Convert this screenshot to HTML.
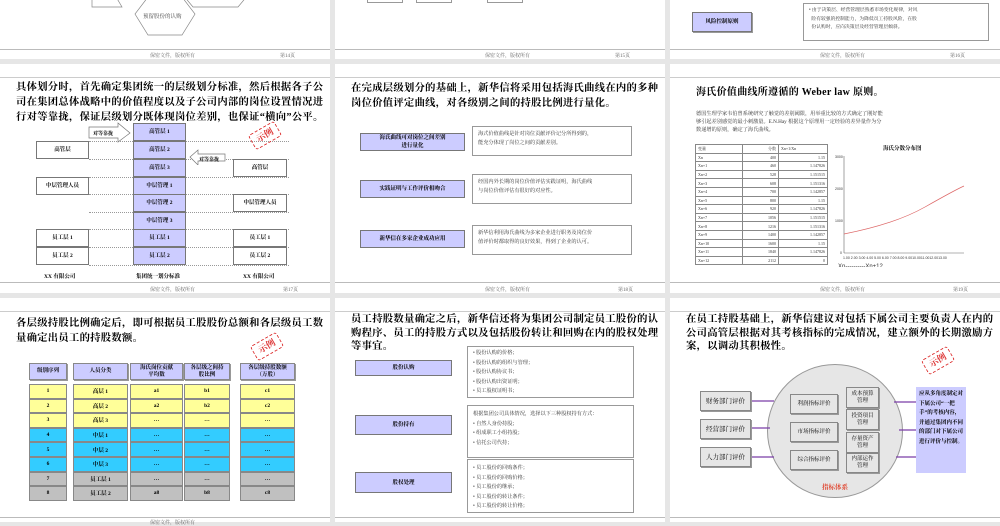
<!DOCTYPE html>
<html><head><meta charset="utf-8">
<style>
*{margin:0;padding:0;box-sizing:border-box}
body{width:1000px;height:522px;background:#e6e6e6;position:relative;overflow:hidden;font-family:"Liberation Serif","Noto Serif CJK SC",serif;color:#000}
.s{position:absolute;background:#fff;overflow:hidden}
.a{position:absolute}
.ft{position:absolute;font-size:5px;color:#666;white-space:nowrap}
.ln{position:absolute;left:0;right:0;height:1px;background:#bbb}
.t{position:absolute;font-weight:bold;font-size:10.3px;line-height:15px;letter-spacing:0.3px;white-space:nowrap}
.bx{position:absolute;border:1px solid #777;display:flex;align-items:center;justify-content:center;text-align:center;font-size:5.5px;line-height:8px;font-weight:bold}
.lav{background:#ccccff}
.wb{position:absolute;border:1px solid #999;background:#fff;font-size:5.2px;line-height:9px;color:#333;padding:3px 5px}
.dl{position:absolute;height:0;border-top:1px dotted #999}
.stamp{position:absolute;width:30px;height:17px;border:1px dashed #d33;color:#d33;font-size:9px;font-weight:bold;text-align:center;line-height:15px;transform:rotate(-30deg);border-radius:3px}
table{border-collapse:collapse}
.tb td{border:1px solid #888;font-size:4px;height:8.6px;padding:0 2px;color:#333}
.c{position:absolute;border:1px solid #888;display:flex;align-items:center;justify-content:center;font-size:5.5px;font-weight:bold;text-align:center;line-height:7px;box-shadow:1px 1px 0 #999}
</style></head><body>

<!-- Row 1 -->
<div class="s" style="left:0;top:0;width:330px;height:59px">
<svg class="a" style="left:0;top:0" width="330" height="48"><g fill="none" stroke="#888" stroke-width="0.7">
<polygon points="92,-10 112,-10 122,7 112,7 102,7 92,7"/>
<polygon points="183,-5 193,7 238,7 248,-5"/>
<polygon points="148,-3 182,-3 195,14 182,35 148,35 135,14"/>
</g></svg>
<div class="a" style="left:143px;top:12px;font-size:5.5px;color:#444">预留股份的认购</div>
<div class="ln" style="top:49px"></div>
<div class="ft" style="left:150px;top:52px">保密文件，版权所有</div>
<div class="ft" style="left:280px;top:52px">第14页</div>
</div>
<div class="s" style="left:335px;top:0;width:330px;height:59px">
<div class="a" style="left:32px;top:-5px;width:36px;height:8px;border:1px solid #999"></div>
<div class="a" style="left:81px;top:-5px;width:36px;height:8px;border:1px solid #999"></div>
<div class="a" style="left:152px;top:-5px;width:36px;height:8px;border:1px solid #999"></div>
<div class="a" style="left:208px;top:-5px;width:32px;height:5px;border:1px solid #bbb"></div>
<div class="a" style="left:240px;top:-5px;width:20px;height:5px;border:1px solid #bbb"></div>
<div class="ln" style="top:49px"></div>
<div class="ft" style="left:150px;top:52px">保密文件，版权所有</div>
<div class="ft" style="left:280px;top:52px">第15页</div>
</div>
<div class="s" style="left:670px;top:0;width:330px;height:59px">
<div class="bx lav" style="left:22px;top:12px;width:60px;height:20px;box-shadow:1px 1px 0 #999">风险控制原则</div>
<div class="wb" style="left:133px;top:3px;width:186px;height:38px;font-size:4.8px;line-height:8.5px">• 由于决策层、经营管理层熟悉市场变化规律，对风<br>&nbsp; 险有较强的控制能力，为降低员工持股风险，在股<br>&nbsp; 份认购时，应向决策层及经营管理层倾斜。</div>
<div class="ln" style="top:49px"></div>
<div class="ft" style="left:150px;top:52px">保密文件，版权所有</div>
<div class="ft" style="left:280px;top:52px">第16页</div>
</div>

<!-- Row 2 slide 17 -->
<div class="s" style="left:0;top:64px;width:330px;height:229px">
<div class="ln" style="top:13px;background:#ccc"></div>
<div class="t" style="left:16px;top:16px">具体划分时，首先确定集团统一的层级划分标准，然后根据各子公<br>司在集团总体战略中的价值程度以及子公司内部的岗位设置情况进<br>行对等靠拢，保证层级划分既体现岗位差别，也保证“横向”公平。</div>
</div>
<div class="a" style="left:0;top:0;width:330px;height:293px">
<div class="dl" style="left:89px;top:141px;width:200px"></div>
<div class="dl" style="left:89px;top:159px;width:200px"></div>
<div class="dl" style="left:89px;top:177px;width:200px"></div>
<div class="dl" style="left:89px;top:194px;width:200px"></div>
<div class="dl" style="left:89px;top:212px;width:200px"></div>
<div class="dl" style="left:89px;top:229px;width:200px"></div>
<div class="dl" style="left:89px;top:247px;width:200px"></div>
<div class="dl" style="left:89px;top:265px;width:200px"></div>
<div class="a" style="left:133px;top:123px;width:53px;height:142px;background:#ccccff;border:1px solid #888"></div>
<div class="bx lav" style="left:133px;top:123px;width:53px;height:18px">高管层 1</div>
<div class="bx lav" style="left:133px;top:141px;width:53px;height:18px">高管层 2</div>
<div class="bx lav" style="left:133px;top:159px;width:53px;height:18px">高管层 3</div>
<div class="bx lav" style="left:133px;top:177px;width:53px;height:18px">中层管理 1</div>
<div class="bx lav" style="left:133px;top:194px;width:53px;height:18px">中层管理 2</div>
<div class="bx lav" style="left:133px;top:212px;width:53px;height:18px">中层管理 3</div>
<div class="bx lav" style="left:133px;top:229px;width:53px;height:18px">员工层 1</div>
<div class="bx lav" style="left:133px;top:247px;width:53px;height:18px">员工层 2</div>
<div class="bx" style="left:36px;top:141px;width:53px;height:18px;background:#fff">高管层</div>
<div class="bx" style="left:36px;top:177px;width:53px;height:18px;background:#fff">中层管理人员</div>
<div class="bx" style="left:36px;top:229px;width:53px;height:18px;background:#fff">员工层 1</div>
<div class="bx" style="left:36px;top:247px;width:53px;height:18px;background:#fff">员工层 2</div>
<div class="bx" style="left:233px;top:159px;width:54px;height:18px;background:#fff">高管层</div>
<div class="bx" style="left:233px;top:194px;width:54px;height:18px;background:#fff">中层管理人员</div>
<div class="bx" style="left:233px;top:229px;width:54px;height:18px;background:#fff">员工层 1</div>
<div class="bx" style="left:233px;top:247px;width:54px;height:18px;background:#fff">员工层 2</div>
<svg class="a" style="left:85px;top:120px" width="150" height="45"><g fill="#fff" stroke="#777" stroke-width="0.7">
<polygon points="4,7 33,7 33,3 45,13 33,22 33,18 4,18"/>
<polygon points="140,34 113,34 113,30 105,37 113,45 113,41 140,41"/></g>
<text x="8" y="15" font-size="5" font-weight="bold" font-family="Noto Serif CJK SC">对等靠拢</text>
<text x="114" y="41" font-size="5" font-weight="bold" font-family="Noto Serif CJK SC">对等靠拢</text></svg>
<div class="a" style="left:44px;top:272px;font-size:5.5px;font-weight:bold">XX 有限公司</div>
<div class="a" style="left:136px;top:272px;font-size:5.5px;font-weight:bold">集团统一划分标准</div>
<div class="a" style="left:243px;top:272px;font-size:5.5px;font-weight:bold">XX 有限公司</div>
<div class="stamp" style="left:250px;top:127px">示例</div>
<div class="ln" style="top:282px;left:0;width:330px"></div>
<div class="ft" style="left:150px;top:286px">保密文件，版权所有</div>
<div class="ft" style="left:283px;top:286px">第17页</div>
</div>

<!-- slide 18 -->
<div class="s" style="left:335px;top:64px;width:330px;height:229px">
<div class="ln" style="top:13px;background:#ccc"></div>
<div class="t" style="left:16px;top:17px">在完成层级划分的基础上，新华信将采用包括海氏曲线在内的多种<br>岗位价值评定曲线，对各级别之间的持股比例进行量化。</div>
<div class="bx lav" style="left:25px;top:69px;width:105px;height:18px">海氏曲线可对岗位之间差别<br>进行量化</div>
<div class="wb" style="left:137px;top:62px;width:160px;height:30px">海式价值曲线是针对岗位贡献评价记分所得到的，<br>能充分体现了岗位之间的贡献差别。</div>
<div class="bx lav" style="left:25px;top:116px;width:105px;height:18px">实践证明与工作评价相吻合</div>
<div class="wb" style="left:137px;top:110px;width:160px;height:30px">经国内外长期的岗位价值评估实践证明，海氏曲线<br>与岗位价值评估有很好的对应性。</div>
<div class="bx lav" style="left:25px;top:166px;width:105px;height:18px">新华信在多家企业成功应用</div>
<div class="wb" style="left:137px;top:161px;width:160px;height:30px">新华信利用海氏曲线为多家企业进行职务及岗位价<br>值评价时都取得的良好效果，得到了企业的认可。</div>
<div class="ln" style="top:218px"></div>
<div class="ft" style="left:150px;top:222px">保密文件，版权所有</div>
<div class="ft" style="left:283px;top:222px">第18页</div>
</div>

<!-- slide 19 -->
<div class="s" style="left:670px;top:64px;width:330px;height:229px">
<div class="ln" style="top:13px;background:#ccc"></div>
<div class="t" style="left:26px;top:21px;font-size:10px">海氏价值曲线所遵循的 Weber law 原则。</div>
<div class="a" style="left:26px;top:46px;font-size:5.2px;line-height:8px;color:#333;white-space:nowrap">德国生理学家韦伯曾系统研究了触觉的差别阈限，用举重比较的方式确定了刚好能<br>够引起差别感觉的最小刺激量。E.N.Hay 根据这个原理用一定经验的差异量作为分<br>数递增的原则，确定了海氏曲线。</div>
<table class="tb a" style="left:25px;top:80px;width:133px">
<tr><td style="width:47px">变量</td><td style="width:36px;text-align:right">分数</td><td>Xn+1/Xn</td></tr>
<tr><td>Xn</td><td align="right">400</td><td align="right">1.15</td></tr>
<tr><td>Xn+1</td><td align="right">460</td><td align="right">1.147826</td></tr>
<tr><td>Xn+2</td><td align="right">528</td><td align="right">1.151515</td></tr>
<tr><td>Xn+3</td><td align="right">608</td><td align="right">1.151316</td></tr>
<tr><td>Xn+4</td><td align="right">700</td><td align="right">1.142857</td></tr>
<tr><td>Xn+5</td><td align="right">800</td><td align="right">1.15</td></tr>
<tr><td>Xn+6</td><td align="right">920</td><td align="right">1.147826</td></tr>
<tr><td>Xn+7</td><td align="right">1056</td><td align="right">1.151515</td></tr>
<tr><td>Xn+8</td><td align="right">1216</td><td align="right">1.151316</td></tr>
<tr><td>Xn+9</td><td align="right">1400</td><td align="right">1.142857</td></tr>
<tr><td>Xn+10</td><td align="right">1600</td><td align="right">1.15</td></tr>
<tr><td>Xn+11</td><td align="right">1840</td><td align="right">1.147826</td></tr>
<tr><td>Xn+12</td><td align="right">2112</td><td align="right">0</td></tr>
</table>
<div class="a" style="left:213px;top:80px;font-size:5.5px;font-weight:bold">海氏分数分布图</div>
<svg class="a" style="left:165px;top:88px" width="165" height="115">
<g stroke="#666" stroke-width="0.6" fill="none"><line x1="9" y1="4" x2="9" y2="101"/><line x1="9" y1="101" x2="129" y2="101"/></g>
<path d="M9 82 Q60 72 90 55 T129 34" stroke="#d66" stroke-width="0.7" fill="none"/>
<g font-size="3.5" fill="#333" font-family="Liberation Sans"><text x="0" y="6">3000</text><text x="0" y="38">2000</text><text x="0" y="70">1000</text><text x="5" y="102">0</text>
<text x="8" y="107">1.00 2.00 3.00 4.00 5.00 6.00 7.00 8.00 9.0010.0011.0012.0013.00</text></g>
<text x="3" y="116" font-size="6" font-family="Liberation Sans" fill="#333">Xn----------Xn+12</text>
</svg>
<div class="ln" style="top:218px"></div>
<div class="ft" style="left:150px;top:222px">保密文件，版权所有</div>
<div class="ft" style="left:283px;top:222px">第19页</div>
</div>

<!-- Row 3 slide 20 -->
<div class="s" style="left:0;top:298px;width:330px;height:224px">
<div class="ln" style="top:13px;background:#ccc"></div>
<div class="t" style="left:16px;top:18px">各层级持股比例确定后，即可根据员工股股份总额和各层级员工数<br>量确定出员工的持股数额。</div>
<div class="stamp" style="left:252px;top:40px">示例</div>
<div class="c lav" style="left:29px;top:65px;width:38px;height:17px">级别序列</div>
<div class="c lav" style="left:73px;top:65px;width:55px;height:17px">人员分类</div>
<div class="c lav" style="left:130px;top:65px;width:53px;height:17px">海氏岗位贡献<br>平均数</div>
<div class="c lav" style="left:184px;top:65px;width:46px;height:17px">各层级之间持<br>股比例</div>
<div class="c lav" style="left:240px;top:65px;width:55px;height:17px">各层级持股数额<br>（万股）</div>
</div>
<svg class="a" style="left:0;top:383px" width="330" height="120">
<defs></defs>
<g id="rows"></g>
</svg>
<div class="a" style="left:0;top:0">
<div style="position:absolute;left:29px;top:384px">
</div>
</div>

<!-- table rows for slide 20 -->
<div class="a" style="left:0;top:384px;width:330px;height:120px">
<style>.r{position:absolute;border:1px solid #888;display:flex;align-items:center;justify-content:center;font-size:5.5px;font-weight:bold;height:14.6px}</style>
<div class="r" style="left:29px;top:0;width:38px;background:#ffff99">1</div><div class="r" style="left:73px;top:0;width:55px;background:#ffff99">高层 1</div><div class="r" style="left:130px;top:0;width:53px;background:#ffff99">a1</div><div class="r" style="left:184px;top:0;width:46px;background:#ffff99">b1</div><div class="r" style="left:240px;top:0;width:55px;background:#ffff99">c1</div>
<div class="r" style="left:29px;top:14.6px;width:38px;background:#ffff99">2</div><div class="r" style="left:73px;top:14.6px;width:55px;background:#ffff99">高层 2</div><div class="r" style="left:130px;top:14.6px;width:53px;background:#ffff99">a2</div><div class="r" style="left:184px;top:14.6px;width:46px;background:#ffff99">b2</div><div class="r" style="left:240px;top:14.6px;width:55px;background:#ffff99">c2</div>
<div class="r" style="left:29px;top:29.2px;width:38px;background:#ffff99">3</div><div class="r" style="left:73px;top:29.2px;width:55px;background:#ffff99">高层 3</div><div class="r" style="left:130px;top:29.2px;width:53px;background:#ffff99">…</div><div class="r" style="left:184px;top:29.2px;width:46px;background:#ffff99">…</div><div class="r" style="left:240px;top:29.2px;width:55px;background:#ffff99">…</div>
<div class="r" style="left:29px;top:43.8px;width:38px;background:#33ccff">4</div><div class="r" style="left:73px;top:43.8px;width:55px;background:#33ccff">中层 1</div><div class="r" style="left:130px;top:43.8px;width:53px;background:#33ccff">…</div><div class="r" style="left:184px;top:43.8px;width:46px;background:#33ccff">…</div><div class="r" style="left:240px;top:43.8px;width:55px;background:#33ccff">…</div>
<div class="r" style="left:29px;top:58.4px;width:38px;background:#33ccff">5</div><div class="r" style="left:73px;top:58.4px;width:55px;background:#33ccff">中层 2</div><div class="r" style="left:130px;top:58.4px;width:53px;background:#33ccff">…</div><div class="r" style="left:184px;top:58.4px;width:46px;background:#33ccff">…</div><div class="r" style="left:240px;top:58.4px;width:55px;background:#33ccff">…</div>
<div class="r" style="left:29px;top:73px;width:38px;background:#33ccff">6</div><div class="r" style="left:73px;top:73px;width:55px;background:#33ccff">中层 3</div><div class="r" style="left:130px;top:73px;width:53px;background:#33ccff">…</div><div class="r" style="left:184px;top:73px;width:46px;background:#33ccff">…</div><div class="r" style="left:240px;top:73px;width:55px;background:#33ccff">…</div>
<div class="r" style="left:29px;top:87.6px;width:38px;background:#c0c0c0">7</div><div class="r" style="left:73px;top:87.6px;width:55px;background:#c0c0c0">员工层 1</div><div class="r" style="left:130px;top:87.6px;width:53px;background:#c0c0c0">…</div><div class="r" style="left:184px;top:87.6px;width:46px;background:#c0c0c0">…</div><div class="r" style="left:240px;top:87.6px;width:55px;background:#c0c0c0">…</div>
<div class="r" style="left:29px;top:102.2px;width:38px;background:#c0c0c0">8</div><div class="r" style="left:73px;top:102.2px;width:55px;background:#c0c0c0">员工层 2</div><div class="r" style="left:130px;top:102.2px;width:53px;background:#c0c0c0">a8</div><div class="r" style="left:184px;top:102.2px;width:46px;background:#c0c0c0">b8</div><div class="r" style="left:240px;top:102.2px;width:55px;background:#c0c0c0">c8</div>
</div>
<div class="ln" style="top:517px;left:0;width:330px"></div>
<div class="ft" style="left:150px;top:519px">保密文件，版权所有</div>

<!-- slide 21 -->
<div class="s" style="left:335px;top:298px;width:330px;height:224px">
<div class="ln" style="top:13px;background:#ccc"></div>
<div class="t" style="left:16px;top:15px;line-height:13.5px">员工持股数量确定之后，新华信还将为集团公司制定员工股份的认<br>购程序、员工的持股方式以及包括股份转让和回购在内的股权处理<br>等事宜。</div>
<div class="bx lav" style="left:20px;top:62px;width:97px;height:16px">股份认购</div>
<div class="wb" style="left:132px;top:48px;width:167px;height:52px;line-height:9.5px;padding:2px 5px">• 股份认购的价格；<br>• 股份认购的组织与管理；<br>• 股份认购协议书；<br>• 股份认购出资证明；<br>• 员工股权证明书；</div>
<div class="bx lav" style="left:20px;top:117px;width:97px;height:20px">股份持有</div>
<div class="wb" style="left:132px;top:107px;width:167px;height:53px;line-height:9.5px;padding:4px 5px">根据集团公司具体情况，选择以下三种股权持有方式：<br>• 自然人身份持股；<br>• 组成职工小组持股；<br>• 信托公司代持；</div>
<div class="bx lav" style="left:20px;top:174px;width:97px;height:21px">股权处理</div>
<div class="wb" style="left:132px;top:161px;width:167px;height:54px;line-height:9.5px;padding:4px 5px">• 员工股份的回购条件；<br>• 员工股份的回购价格；<br>• 员工股份的继承；<br>• 员工股份的转让条件；<br>• 员工股份的转让价格；</div>
<div class="ln" style="top:219px"></div>
</div>

<!-- slide 22 -->
<div class="s" style="left:670px;top:298px;width:330px;height:224px">
<div class="ln" style="top:13px;background:#ccc"></div>
<div class="t" style="left:16px;top:15px;line-height:13.5px">在员工持股基础上，新华信建议对包括下属公司主要负责人在内的<br>公司高管层根据对其考核指标的完成情况，建立额外的长期激励方<br>案，以调动其积极性。</div>
<div class="stamp" style="left:253px;top:54px">示例</div>
<div class="a" style="left:97px;top:66px;width:136px;height:134px;border-radius:50%;background:#e6e6e6;border:1px solid #999"></div>
<svg class="a" style="left:0;top:0" width="330" height="224"><g stroke="#7b3fa8" stroke-width="1.2">
<line x1="81" y1="103" x2="104" y2="103"/><line x1="81" y1="130" x2="100" y2="130"/><line x1="81" y1="159" x2="104" y2="159"/>
<line x1="224" y1="104" x2="246" y2="104"/><line x1="229" y1="132" x2="246" y2="132"/><line x1="226" y1="159" x2="246" y2="159"/></g></svg>
<div class="c" style="left:30px;top:93px;width:51px;height:20px;background:#e6e6e6;font-weight:normal;font-size:6.5px">财务部门评价</div>
<div class="c" style="left:30px;top:121px;width:51px;height:20px;background:#e6e6e6;font-weight:normal;font-size:6.5px">经营部门评价</div>
<div class="c" style="left:30px;top:149px;width:51px;height:20px;background:#e6e6e6;font-weight:normal;font-size:6.5px">人力部门评价</div>
<div class="c" style="left:120px;top:96px;width:48px;height:20px;background:#e6e6e6;font-weight:normal">利润指标评价</div>
<div class="c" style="left:120px;top:124px;width:48px;height:20px;background:#e6e6e6;font-weight:normal">市场指标评价</div>
<div class="c" style="left:120px;top:152px;width:48px;height:20px;background:#e6e6e6;font-weight:normal">综合指标评价</div>
<div class="c" style="left:176px;top:89px;width:33px;height:21px;background:#e6e6e6;font-weight:normal">成本预算<br>管理</div>
<div class="c" style="left:176px;top:111px;width:33px;height:21px;background:#e6e6e6;font-weight:normal">投资项目<br>管理</div>
<div class="c" style="left:176px;top:134px;width:33px;height:21px;background:#e6e6e6;font-weight:normal">存量资产<br>管理</div>
<div class="c" style="left:176px;top:155px;width:33px;height:20px;background:#e6e6e6;font-weight:normal">内部运作<br>管理</div>
<div class="a" style="left:246px;top:89px;width:50px;height:86px;background:#ccccff;font-size:5.5px;line-height:9.5px;font-weight:bold;padding:3px 3px">应从多角度制定对下属公司“一把手”的考核内容，并通过集团内不同的部门对下属公司进行评价与控制。</div>
<div class="a" style="left:152px;top:184px;font-size:6.5px;font-weight:bold;color:#e0452f">指标体系</div>
<div class="ln" style="top:219px"></div>
</div>

</body></html>
